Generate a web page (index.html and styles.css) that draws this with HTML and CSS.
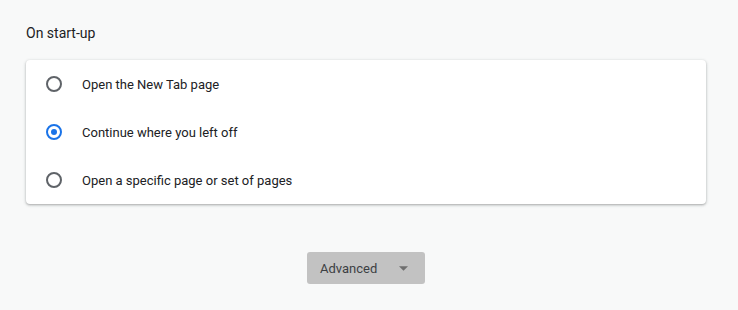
FILE: index.html
```html
<!DOCTYPE html>
<html lang="en">
<head>
    <meta charset="UTF-8">
    <title>Settings</title>
    <link rel="stylesheet" href="styles.css">
</head>
<body>
    <div class="page">
        <h2 class="section-title">On start-up</h2>
        <div class="card">
            <label class="row">
                <span class="radio"></span>
                <span class="label">Open the New Tab page</span>
            </label>
            <label class="row">
                <span class="radio checked"></span>
                <span class="label">Continue where you left off</span>
            </label>
            <label class="row">
                <span class="radio"></span>
                <span class="label">Open a specific page or set of pages</span>
            </label>
        </div>
        <div class="advanced-wrap">
            <button class="advanced">
                Advanced
                <svg width="9" height="5" viewBox="0 0 10 5"><path d="M0 0h10L5 5z" fill="#6e6e6e"/></svg>
            </button>
        </div>
    </div>
</body>
</html>
```

FILE: styles.css
```css
body, html {
    margin: 0;
    padding: 0;
    background: #f8f9f9;
    font-family: Roboto, Arial, sans-serif;
    color: #202124;
}

.page {
    width: 680px;
    margin-left: 26px;
    padding-top: 24px;
}

.section-title {
    font-size: 14px;
    font-weight: 400;
    margin: 0 0 17px;
    line-height: 19px;
}

.card {
    background: #fff;
    border-radius: 4px;
    box-shadow: 0 1px 2px rgba(60, 64, 67, 0.3), 0 1px 3px 1px rgba(60, 64, 67, 0.12);
}

.row {
    display: flex;
    align-items: center;
    height: 48px;
    padding-left: 20px;
    font-size: 13px;
}

.radio {
    width: 12px;
    height: 12px;
    border: 2px solid #5f6368;
    border-radius: 50%;
    margin-right: 20px;
    box-sizing: content-box;
    position: relative;
}

.radio.checked {
    border-color: #1a73e8;
}

.radio.checked::after {
    content: '';
    position: absolute;
    left: 3px;
    top: 3px;
    width: 6px;
    height: 6px;
    border-radius: 50%;
    background: #1a73e8;
}

.advanced-wrap {
    display: flex;
    justify-content: center;
    margin-top: 48px;
}

.advanced {
    display: flex;
    align-items: center;
    gap: 22px;
    height: 32px;
    width: 118px;
    padding: 0 0 0 13px;
    border: none;
    border-radius: 3px;
    background: #c2c2c2;
    color: #3c4043;
    font-family: Roboto, Arial, sans-serif;
    font-size: 13px;
}
```
